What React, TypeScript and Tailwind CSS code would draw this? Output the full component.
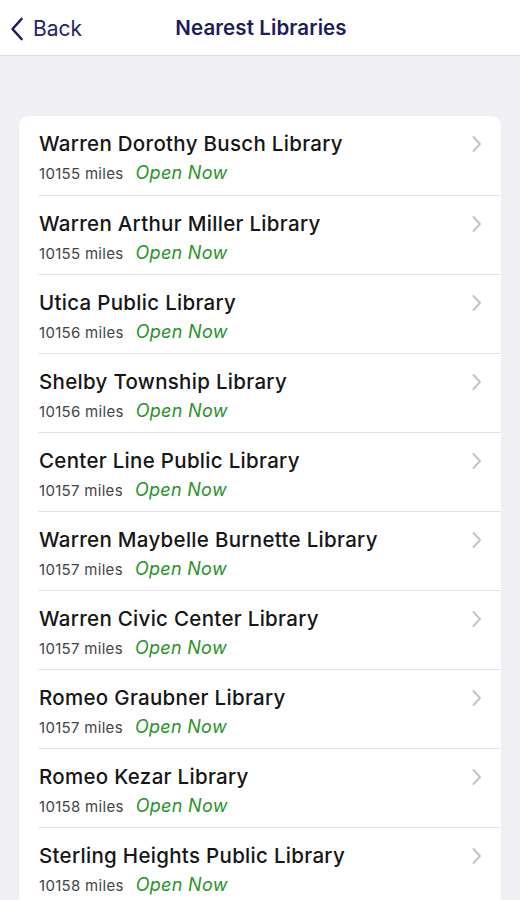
import React from "react";

const libs = [
  ["Warren Dorothy Busch Library", "10155"],
  ["Warren Arthur Miller Library", "10155"],
  ["Utica Public Library", "10156"],
  ["Shelby Township Library", "10156"],
  ["Center Line Public Library", "10157"],
  ["Warren Maybelle Burnette Library", "10157"],
  ["Warren Civic Center Library", "10157"],
  ["Romeo Graubner Library", "10157"],
  ["Romeo Kezar Library", "10158"],
  ["Sterling Heights Public Library", "10158"],
];

export default function App() {
  return (
    <div className="w-[520px] h-[900px] overflow-hidden bg-[#efeff4]" style={{ fontFamily: "Inter, 'Noto Sans', sans-serif" }}>
      <div className="h-[56px] bg-white border-b border-[#dcdce0] flex items-center relative">
        <div className="flex items-center pl-[10px] pt-[2px] text-[#1c1c5c]">
          <svg width="14" height="24" viewBox="0 0 14 24" fill="none">
            <path d="M11.5 2 L2.5 12 L11.5 22" stroke="#1c1c5c" strokeWidth="2.6" strokeLinecap="round" strokeLinejoin="round" />
          </svg>
          <span className="ml-[9px] text-[21px] text-[#24246a]">Back</span>
        </div>
        <div className="absolute left-0 right-0 pt-[2px] pl-[2px] text-center text-[20.5px] font-semibold tracking-[0.1px] text-[#1c1c5c] pointer-events-none">Nearest Libraries</div>
      </div>
      <div className="mx-[19px] mt-[60px] bg-white rounded-[10px] overflow-hidden">
        {libs.map(([name, miles], i) => (
          <div key={i} className="pl-[39px] -ml-[20px]">
            <div className={`h-[79px] flex items-start pr-[18px] ${i > 0 ? "border-t border-[#e4e4e8]" : ""}`}>
              <div className="flex-1 pt-[15px] pl-[1px]">
                <div className="text-[20.5px] font-medium tracking-[0.3px] text-[#161616] leading-[26px]">{name}</div>
                <div className="flex items-baseline mt-[2px]">
                  <span className="text-[15px] tracking-[0.3px] text-[#444]">{miles} miles</span>
                  <span className="ml-[12px] text-[18px] italic tracking-[0.3px] text-[#279327]">Open Now</span>
                </div>
              </div>
              <svg className="mt-[19px]" width="13" height="18" viewBox="0 0 13 18" fill="none">
                <path d="M3.5 2 L10 9 L3.5 16" stroke="#c4c4c8" strokeWidth="2" strokeLinecap="round" strokeLinejoin="round" />
              </svg>
            </div>
          </div>
        ))}
      </div>
    </div>
  );
}
